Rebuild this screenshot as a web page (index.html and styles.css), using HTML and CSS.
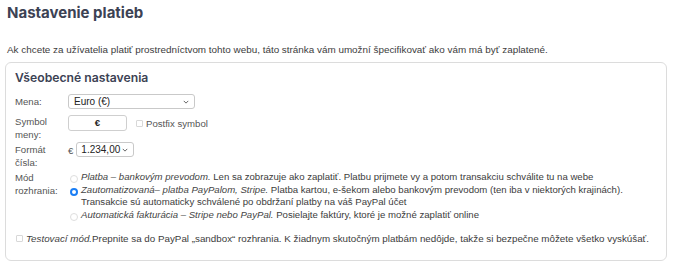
FILE: index.html
```html
<!DOCTYPE html>
<html lang="sk">
<head>
<meta charset="utf-8">
<title>Nastavenie platieb</title>
<link rel="stylesheet" href="styles.css">
</head>
<body>
<h1 class="page-title">Nastavenie platieb</h1>
<p class="intro">Ak chcete za užívatelia platiť prostredníctvom tohto webu, táto stránka vám umožní špecifikovať ako vám má byť zaplatené.</p>
<section class="box">
  <h2 class="box-title">Všeobecné nastavenia</h2>
  <div class="form">
    <div class="row row-single">
      <div class="lbl">Mena:</div>
      <div class="ctl">
        <div class="select select-currency"><span>Euro (€)</span><svg class="chev" viewBox="0 0 8 5"><path d="M1 1l3 3 3-3" fill="none" stroke="#555" stroke-width="1.2"/></svg></div>
      </div>
    </div>
    <div class="row">
      <div class="lbl">Symbol<br>meny:</div>
      <div class="ctl">
        <div class="input-symbol">€</div>
        <span class="check"></span><span class="muted">Postfix symbol</span>
      </div>
    </div>
    <div class="row">
      <div class="lbl">Formát<br>čísla:</div>
      <div class="ctl">
        <span class="cur">€</span>
        <div class="select select-format"><span>1.234,00</span><svg class="chev" viewBox="0 0 8 5"><path d="M1 1l3 3 3-3" fill="none" stroke="#555" stroke-width="1.2"/></svg></div>
      </div>
    </div>
    <div class="row">
      <div class="lbl">Mód<br>rozhrania:</div>
      <div class="radios">
        <div class="opt"><span class="radio"></span><div><em>Platba – bankovým prevodom.</em> Len sa zobrazuje ako zaplatiť. Platbu prijmete vy a potom transakciu schválite tu na webe</div></div>
        <div class="opt"><span class="radio on"></span><div><em>Zautomatizovaná– platba PayPalom, Stripe.</em> Platba kartou, e-šekom alebo bankovým prevodom (ten iba v niektorých krajinách).<br>Transakcie sú automaticky schválené po obdržaní platby na váš PayPal účet</div></div>
        <div class="opt"><span class="radio"></span><div><em>Automatická fakturácia – Stripe nebo PayPal.</em> Posielajte faktúry, ktoré je možné zaplatiť online</div></div>
      </div>
    </div>
  </div>
  <div class="test"><span class="check"></span><span class="test-text"><em>Testovací mód.</em>Prepnite sa do PayPal „sandbox“ rozhrania. K žiadnym skutočným platbám nedôjde, takže si bezpečne môžete všetko vyskúšať.</span></div>
</section>
</body>
</html>
```
FILE: styles.css
```css
body {
  margin: 0;
  padding: 0 11px 0 5px;
  font-family: "Liberation Sans", Arial, sans-serif;
  font-size: 9.6px;
  color: #3c3c3c;
  background: #fff;
}
.page-title {
  margin: 0;
  padding: 4px 0 0 2px;
  font-family: Inter, "Liberation Sans", sans-serif;
  font-size: 15px;
  font-weight: 700;
  color: #3c4254;
  line-height: 18px;
}
.intro {
  margin: 21px 0 0 2px;
  line-height: 13px;
  font-size: 9.9px;
  color: #3c3c3c;
}
.box {
  margin-top: 6px;
  height: 199px;
  box-sizing: border-box;
  border: 1px solid #dcdcdc;
  border-radius: 6px;
  padding: 6px 10px 0 9px;
}
.box-title {
  margin: 0;
  font-family: Inter, "Liberation Sans", sans-serif;
  font-size: 12.2px;
  font-weight: 600;
  color: #3c4254;
  line-height: 18px;
}
.form {
  margin-top: 8px;
  display: flex;
  flex-direction: column;
  gap: 2px;
}
.row {
  display: flex;
  align-items: flex-start;
}
.row-single { height: 18px; }
.lbl {
  width: 53px;
  flex: none;
  line-height: 13px;
  color: #555;
}
.ctl {
  display: flex;
  align-items: center;
}
.select {
  box-sizing: border-box;
  height: 15px;
  border: 1px solid #c9c9c9;
  border-radius: 3px;
  background: #fff;
  display: flex;
  align-items: center;
  justify-content: space-between;
  padding: 0 5px;
  color: #222;
  font-size: 10px;
  margin-top: -1px;
}
.select-currency { width: 127px; }
.select-format { width: 58px; font-size: 10px; padding: 0 5px 0 4px; }
.chev { width: 6px; height: 4px; flex: none; }
.input-symbol {
  box-sizing: border-box;
  width: 59px;
  height: 16px;
  border: 1px solid #cfcfcf;
  border-radius: 3px;
  text-align: center;
  line-height: 14px;
  color: #222;
  font-weight: 700;
}
.check {
  display: inline-block;
  flex: none;
  width: 5px;
  height: 5px;
  border: 1px solid #d8d8d8;
  border-radius: 1px;
  margin: 0 3px 0 9px;
}
.muted { color: #555; }
.cur { color: #555; margin-right: 3px; }
.radios {
  display: flex;
  flex-direction: column;
  line-height: 12.7px;
  color: #3c3c3c;
}
.opt {
  display: flex;
  align-items: flex-start;
}
.radio {
  flex: none;
  width: 6px;
  height: 6px;
  border: 1px solid #dedede;
  border-radius: 50%;
  margin: 4px 3px 0 2px;
}
.radio.on {
  border: 2px solid #1a7ef5;
  width: 4px;
  height: 4px;
  background: #fff;
}
em { font-style: italic; color: #444; }
.test {
  margin-top: 10px;
  display: flex;
  align-items: center;
  line-height: 13px;
  font-size: 9.8px;
  white-space: nowrap;
}
.test .check { margin: 0 3px 0 1px; }
```
